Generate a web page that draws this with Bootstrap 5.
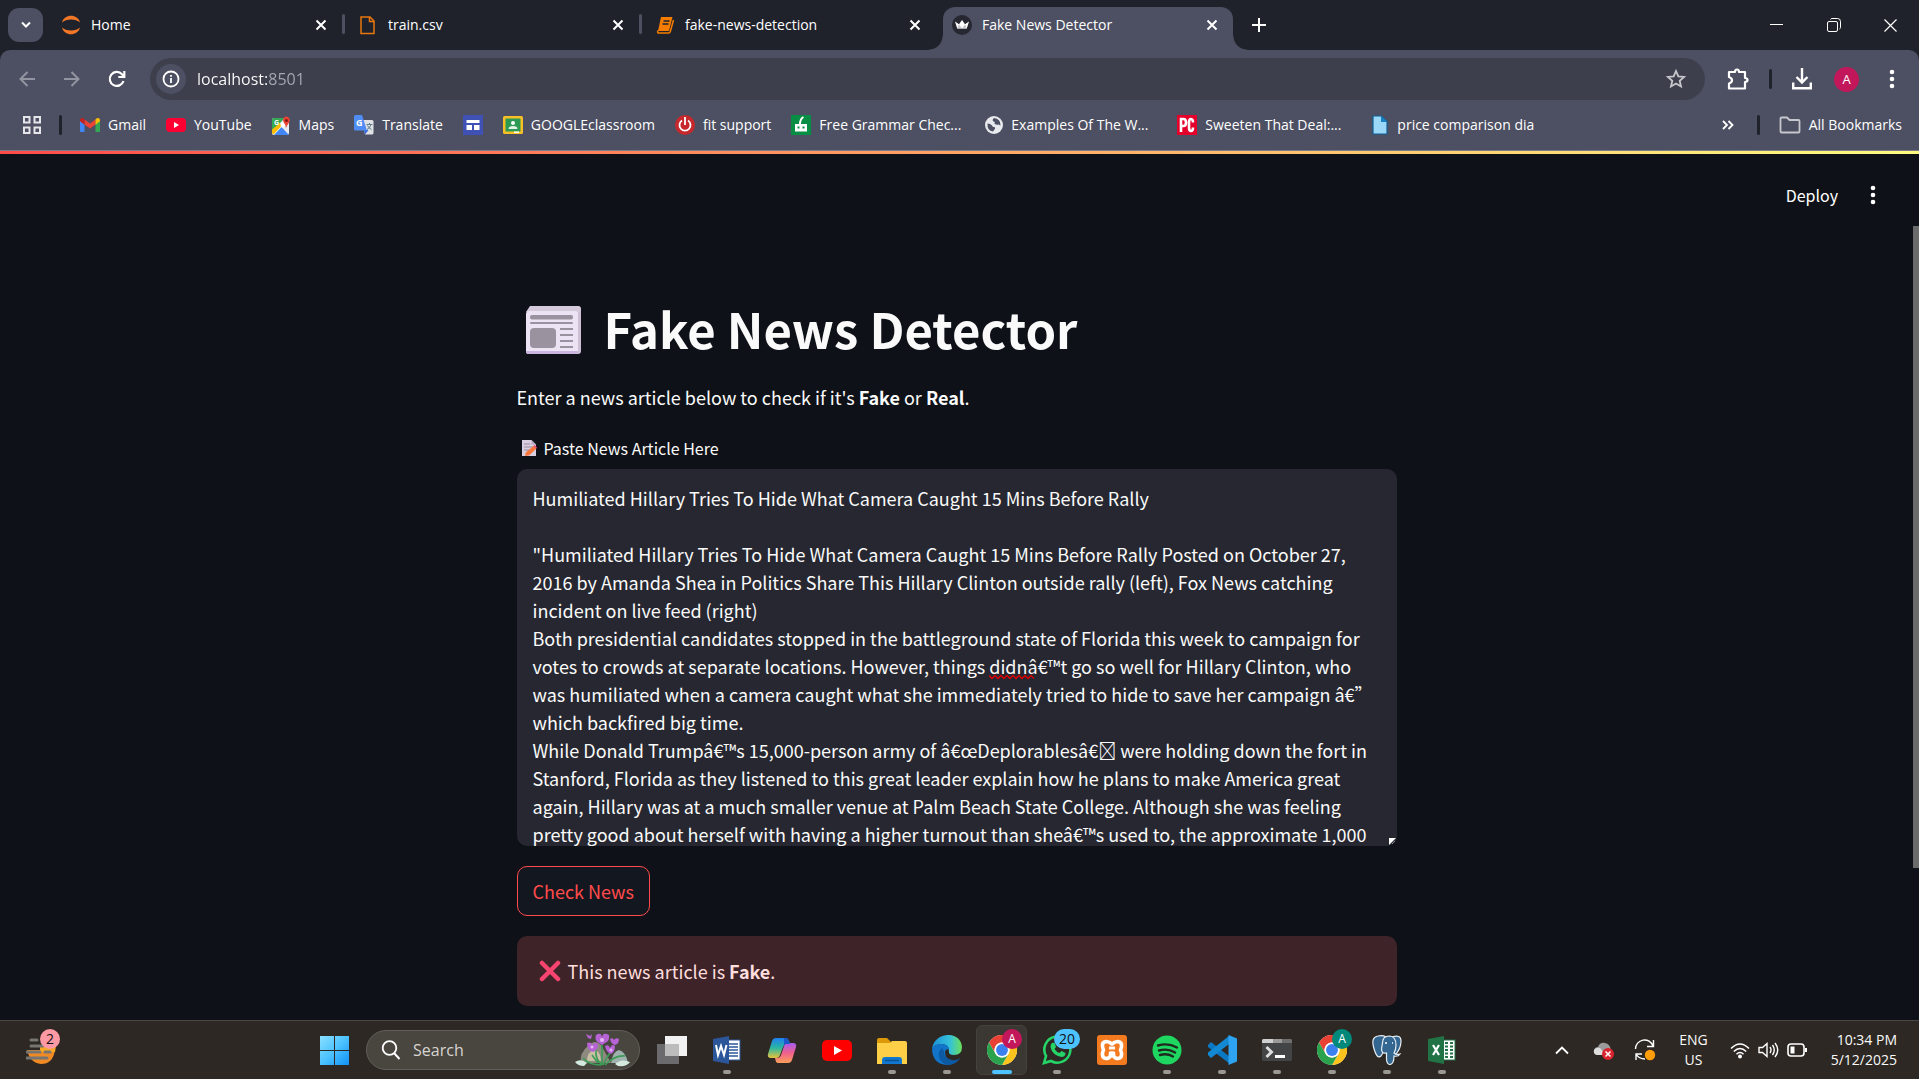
<!DOCTYPE html>
<html lang="en">
<head>
<meta charset="utf-8">
<meta name="viewport" content="width=device-width, initial-scale=1">
<title>Fake News Detector</title>
<link href="https://cdn.jsdelivr.net/npm/bootstrap@5.3.0/dist/css/bootstrap.min.css" rel="stylesheet">
<style>
:root{--strip:#1f222b;--bar:#4d4f62;--field:#3d404c;--page:#0e1117;--ui:"Open Sans","Noto Sans",sans-serif;--app:"Noto Sans CJK SC","Noto Sans",sans-serif}
body{background:var(--page);color:#fafafa;font-family:var(--ui);font-size:14px;line-height:20px}
svg{display:block;flex:none}
button,a{color:inherit}
.plain{background:none;border:0;padding:0}
/* browser tabs */
.tabstrip{background:var(--strip);height:50px}
.tab-search{width:35px;height:34px;margin:0 5px 0 8px;border-radius:11px;background:var(--bar)}
.b-tab{width:297px;height:43px;margin-top:7px;padding:0 18px 7px 13px;position:relative}
.b-tab .ico{width:20px;margin-right:10px}
.b-tab a{color:#fff;text-decoration:none}
.b-tab.sep::after{content:"";position:absolute;right:0;top:7px;width:3px;height:20px;border-radius:2px;background:var(--bar)}
.b-tab.current{z-index:1}
.b-tab.current .back{position:absolute;inset:0 3px 0 4px;background:var(--bar);border-radius:12px 12px 0 0;z-index:-1}
.back::before,.back::after{content:"";position:absolute;bottom:0;width:14px;height:14px}
.back::before{left:-14px;background:radial-gradient(circle at 0 0,transparent 13px,var(--bar) 14px)}
.back::after{right:-14px;background:radial-gradient(circle at 100% 0,transparent 13px,var(--bar) 14px)}
.winbtn{width:57px;height:50px}
/* toolbar */
.toolwrap{background:var(--strip)}
.toolwrap>div{background:var(--bar);border-radius:10px 10px 0 0}
.toolbar{height:50px;padding:8px 24px 0 4px}
.nav-b{width:45px;height:42px}
.omni{background:var(--field);height:42px;border-radius:21px;margin:0 22px 0 11px;padding:0 18px 0 6px}
.omni input{background:linear-gradient(90deg,#fff 70px,#a7a9b2 70px);-webkit-background-clip:text;background-clip:text;-webkit-text-fill-color:transparent;color:#fff;border:0;outline:0;font-size:16px;padding:0}
.info{width:30px;height:30px;border-radius:50%;background:var(--bar);margin-right:11px}
.vrule{width:3px;height:20px;border-radius:2px;background:var(--strip);flex:none;margin:0 20px}
.toolbar .avatar{width:25px;height:25px;border-radius:50%;background:#c2185b;font-size:13px;margin:0 30px 0 22px}
.bookmarks{height:50px;padding:0 17px 0 23px;white-space:nowrap}
.bookmarks a{color:#fff;text-decoration:none;display:flex;align-items:center;gap:8px;margin-right:20px}
.bookmarks .vrule{margin:0 18px}
.bookmarks .cut{width:146px}
.bookmarks .more .vrule{margin:0 19px 0 23px}
.topline{height:4px;border-top:1px solid #7b7d8b;background:linear-gradient(90deg,#ff4b4b,#fffd80)}
/* app */
.app{font-family:var(--app);font-size:18px;line-height:28px;padding:0 6px 0 0}
.app-head{height:84px;padding:0 37px 2px 0;font-size:16px;gap:32px}
.thumb{position:absolute;right:0;top:72px;width:6px;height:642px;background:#6b6b6b}
.col-main{max-width:880px;margin:0 auto;padding-top:52px}
h1{font-family:var(--app);font-size:49px;font-weight:700;line-height:66px;margin:0 0 22px;gap:23px;padding:5px 0 0 9px}
.intro{margin:0 0 25px}
.lab{font-size:16px;line-height:24px;gap:7px;margin:0 0 9px;padding:0 0 0 4px}
.paste{height:377px;border:0;border-radius:10px;background:#262730;color:#fafafa;padding:15px 16px;font-size:18px;line-height:28px;resize:none;overflow:hidden;outline:0}
.squiggle{position:absolute;left:472px;top:205px}
.grip{position:absolute;right:1px;bottom:1px}
.check{height:50px;margin:20px 0;padding:0 15px;border:1px solid #ff4b4b;border-radius:10px;background:#131720;color:#ff4b4b}
.verdict{height:70px;border:0;border-radius:10px;background:#3e2328;color:#ffdede;padding:0 22px;margin:0;gap:7px}
/* taskbar */
.taskbar{background:#2d2823;border-top:1px solid #4b4742;height:59px}
.side{flex:0 0 16%}
.t-ic{width:55px;height:58px;position:relative;display:flex;align-items:center;justify-content:center}
.t-ic.run::after{content:"";position:absolute;bottom:5px;width:8px;height:4px;border-radius:2px;background:#9b9893}
.t-ic.front::before{content:"";position:absolute;inset:4px 2px;background:#3b3732;border:1px solid #45413c;border-radius:6px}
.t-ic.front::after{width:20px;background:#4cc2ff}
.t-ic svg{position:relative}
.dot{position:absolute;border-radius:10px;height:20px;min-width:20px;text-align:center;color:#fff;font-size:12px;top:8px;left:28px}
.dot.pink{background:#c2185b}
.dot.teal{background:#00897b}
.dot.news{left:40px;background:#ff99a4;color:#111;font-size:14px}
.dot.count{left:25px;width:26px;background:#4cc2ff;color:#111;font-size:14px}
.weather{position:relative;padding-left:26px;height:58px}
.searchbox{width:274px;height:40px;border-radius:20px;background:#494640;border:1px solid #625f5a;margin-right:4px;padding:0 8px 0 14px}
.searchbox input{background:none;border:0;outline:0;color:#d6d4d1;font-size:16px;padding:0;min-width:0}
.searchbox input::placeholder{color:#d6d4d1;opacity:1}
.tray{padding-right:22px}
.tray .two{line-height:20px;text-align:center}
.tray .lang{margin:0 22px 0 23px}
.tray .clock{margin-left:23px}
.tray .cloud{margin:0 19px 0 24px}
</style>
</head>
<body class="d-flex flex-column vh-100 overflow-hidden">
<svg width="0" height="0" class="position-absolute" aria-hidden="true">
<defs>
<symbol id="x" viewBox="0 0 12 12"><path d="M1.500 1.500l9 9m0-9l-9 9" stroke="#fff" stroke-width="2" fill="none"/></symbol>
<symbol id="dots" viewBox="0 0 6 20"><g fill="#fff"><circle cx="3" cy="3" r="2.300"/><circle cx="3" cy="10" r="2.300"/><circle cx="3" cy="17" r="2.300"/></g></symbol>
<symbol id="chrome" viewBox="0 0 48 48"><circle cx="24" cy="24" r="24" fill="#fff"/><path d="M3.200 12A24 24 0 0 1 44.800 12H24a12 12 0 0 0-10.400 18z" fill="#e94235"/><path d="M44.800 12A24 24 0 0 1 24 48l10.400-18A12 12 0 0 0 24 12z" fill="#fcc31e"/><path d="M24 48A24 24 0 0 1 3.200 12l10.400 18A12 12 0 0 0 34.400 30z" fill="#2ba24c"/><circle cx="24" cy="24" r="12" fill="#fff"/><circle cx="24" cy="24" r="9.500" fill="#3b80ee"/></symbol>
</defs>
</svg>
<header>
<nav class="tabstrip d-flex align-items-center" aria-label="Tabs">
<button class="tab-search plain d-flex align-items-center justify-content-center" aria-label="Search tabs"><svg width="12" height="8"><path d="M2 1.500l4 4 4-4" stroke="#fff" stroke-width="2" fill="none"/></svg></button>
<div class="b-tab sep d-flex align-items-center align-self-start"><span class="ico"><svg width="20" height="20" viewBox="0 0 20 20"><path d="M1 7.500C3-1.500 17-1.500 19 7.500 15 3.500 5 3.500 1 7.500zM1 12.500c2 9 16 9 18 0-4 4-14 4-18 0z" fill="#f37726"/></svg></span><a href="#">Home</a><button class="plain ms-auto" aria-label="Close"><svg width="12" height="12"><use href="#x"/></svg></button></div>
<div class="b-tab sep d-flex align-items-center align-self-start"><span class="ico"><svg width="20" height="20" viewBox="0 0 20 20"><path d="M3 2h9l4 4v12.500H3zM11.500 2v4.500H16" stroke="#e8770e" stroke-width="1.500" fill="none"/></svg></span><a href="#">train.csv</a><button class="plain ms-auto" aria-label="Close"><svg width="12" height="12"><use href="#x"/></svg></button></div>
<div class="b-tab d-flex align-items-center align-self-start"><span class="ico"><svg width="20" height="20" viewBox="0 0 20 20"><path d="M6 2h11.500L14 16H3z" fill="#f57c00"/><path d="M3 15.500c-1 2 0 2.500 1 2.500h9.500c1 0 1.500-.5 1.800-1.500L18.500 5" stroke="#f57c00" stroke-width="1.500" fill="none"/><path d="M8.500 6h6M7.500 9h6" stroke="#1f222b" stroke-width="1.500"/></svg></span><a href="#">fake-news-detection</a><button class="plain ms-auto" aria-label="Close"><svg width="12" height="12"><use href="#x"/></svg></button></div>
<div class="b-tab current d-flex align-items-center align-self-start"><span class="back"></span><span class="ico"><svg width="20" height="20" viewBox="0 0 20 20"><circle cx="10" cy="10" r="10" fill="#262730"/><path d="M3 6.500l4 2.700L10 5l3 4.200 4-2.700L14.800 13.500H5.200z" fill="#fff"/><path d="M5.200 13.500L7 9.200l3 4.300 3-4.300 1.800 4.300z" fill="#c8c8cc"/></svg></span><a href="#">Fake News Detector</a><button class="plain ms-auto" aria-label="Close"><svg width="12" height="12"><use href="#x"/></svg></button></div>
<button class="plain ms-3" aria-label="New tab"><svg width="14" height="14"><path d="M7 0v14M0 7h14" stroke="#fff" stroke-width="2"/></svg></button>
<div class="ms-auto d-flex">
<button class="winbtn plain d-flex align-items-center justify-content-center" aria-label="Minimize"><svg width="13" height="13"><path d="M0 5.500h13" stroke="#fff"/></svg></button>
<button class="winbtn plain d-flex align-items-center justify-content-center" aria-label="Restore"><svg width="14" height="14" fill="none" stroke="#fff"><rect x=".5" y="3.500" width="10" height="10" rx="1.500"/><path d="M3.500 1.500q.5-1 1.500-1h5.500q3 0 3 3v6q0 1-1 1.500"/></svg></button>
<button class="winbtn plain d-flex align-items-center justify-content-center" aria-label="Close window"><svg width="13" height="13"><path d="M.5 .5l12 12m0-12l-12 12" stroke="#fff" stroke-width="1.200"/></svg></button>
</div>
</nav>
<div class="toolwrap"><div>
<div class="toolbar d-flex align-items-center">
<button class="nav-b plain d-flex align-items-center justify-content-center" aria-label="Back"><svg width="16" height="16" fill="none" stroke="#9294a1" stroke-width="2"><path d="M16 8H2M8.500 1L1.500 8l7 7"/></svg></button>
<button class="nav-b plain d-flex align-items-center justify-content-center" aria-label="Forward"><svg width="16" height="16" fill="none" stroke="#9294a1" stroke-width="2"><path d="M0 8h14M7.500 1l7 7-7 7"/></svg></button>
<button class="nav-b plain d-flex align-items-center justify-content-center" aria-label="Reload"><svg width="18" height="18" fill="none" stroke="#fff" stroke-width="2.200"><path d="M15.500 11A7 7 0 1 1 14 4.200L16 6.500M16.300 1v6h-6"/></svg></button>
<div class="omni d-flex align-items-center flex-grow-1">
<span class="info d-flex align-items-center justify-content-center"><svg width="18" height="18"><circle cx="9" cy="9" r="7.500" stroke="#fff" stroke-width="1.800" fill="none"/><path d="M9 8v5M9 5v1.800" stroke="#fff" stroke-width="1.800"/></svg></span>
<input class="flex-grow-1" type="text" value="localhost:8501" aria-label="Address">
<button class="plain" aria-label="Bookmark this page"><svg width="22" height="22" viewBox="0 0 22 22"><path d="M11 3l2.300 5.400 5.800.5-4.400 3.900 1.300 5.700-5-3-5 3 1.300-5.700L2.900 8.900l5.800-.5z" stroke="#c6c7cc" stroke-width="1.800" fill="none"/></svg></button>
</div>
<button class="plain" aria-label="Extensions"><svg width="22" height="24" viewBox="0 0 22 24"><path d="M2 5h6q0-2.500 2-2.500T12 5h6v6q2.500.2 2.500 2T18 15v6.500H2v-5q3-.8 3-3.200T2 10z" stroke="#fff" stroke-width="2.200" fill="none" stroke-linejoin="round"/></svg></button>
<span class="vrule"></span>
<button class="plain" aria-label="Downloads"><svg width="20" height="22" viewBox="0 0 20 22"><path d="M10 0v14M4.500 9l5.500 5.500L15.500 9M1.200 14.500v5.800h17.600v-5.800" stroke="#fff" stroke-width="2.400" fill="none"/></svg></button>
<button class="plain avatar text-white" aria-label="Profile">A</button>
<button class="plain" aria-label="Menu"><svg width="6" height="20"><use href="#dots"/></svg></button>
</div>
<div class="bookmarks d-flex align-items-center">
<button class="plain" aria-label="Apps"><svg width="18" height="18" fill="none" stroke="#e6e6ea" stroke-width="2"><path d="M1 1h5.500v5.500H1zM11.500 1H17v5.500h-5.500zM1 11.500h5.500V17H1zM11.500 11.500H17V17h-5.500z"/></svg></button>
<span class="vrule"></span>
<a href="#"><svg width="20" height="16" viewBox="0 0 20 16"><path d="M0 3v11q0 1 1 1h3.500V7z" fill="#4285f4"/><path d="M20 3v11q0 1-1 1h-3.500V7z" fill="#34a853"/><path d="M4.500 2.500L10 6.600l5.500-4.100v5L10 11.600 4.500 7.500z" fill="#ea4335"/><path d="M15.500 2.200C18 0 20 1 20 3.500v.8l-4.500 3.400z" fill="#fbbc04"/><path d="M4.500 2.200C2 0 0 1 0 3.500v.8l4.500 3.400z" fill="#c5221f"/></svg>Gmail</a>
<a href="#"><svg width="20" height="14" viewBox="0 0 20 14"><rect width="20" height="14" rx="4" fill="#f03"/><path d="M8 4l5 3-5 3z" fill="#fff"/></svg>YouTube</a>
<a href="#"><svg width="19" height="19" viewBox="0 0 19 19"><rect y="2" width="17" height="17" rx="2" fill="#e8eaed"/><path d="M0 4q0-2 2-2h11L0 15z" fill="#34a853"/><path d="M0 17L13 4l4 0v2L4 19H2z" fill="#fff"/><path d="M2 19l7.500-8 7.500 8z" fill="#4285f4"/><path d="M0 13.500V17l1.500 1.500L9 10.500 8 7z" fill="#fbbc04"/><path d="M14 12q0-3-2-5-2-3 .2-5.500 2-2 4.400 0Q19 4 16.800 7 15 9 14 12z" fill="#ea4335"/><circle cx="14.400" cy="4.500" r="1.500" fill="#811411"/><text x="2" y="9" font-size="7" font-weight="700" fill="#fff">G</text></svg>Maps</a>
<a href="#"><svg width="20" height="20" viewBox="0 0 20 20"><path d="M8 5h10q1.500 0 1.500 1.500V18q0 1.500-1.500 1.500h-7z" fill="#dfe1e5"/><path d="M10 15l1 4.500 3.500-4.500z" fill="#3367d6"/><path d="M1.500 0H8l5 15.500H1.500Q0 15.500 0 14V1.500Q0 0 1.500 0z" fill="#4f8df5"/><path d="M12.500 9.500h6M15.500 8v1.500M17 9.500q-.5 3-4 5M13.500 10.500q1 2.500 4 4" stroke="#607d8b" fill="none"/><text x="2" y="11" font-size="9" font-weight="700" fill="#fff">G</text></svg>Translate</a>
<a href="#" aria-label="Sites"><svg width="20" height="20"><rect width="20" height="20" fill="#3f51b5"/><path d="M3.500 5h13v3h-13zM3.500 10h5.500v5H3.500zM11 10h5.500v5H11z" fill="#fff"/></svg></a>
<a href="#"><svg width="20" height="18" viewBox="0 0 20 18"><rect width="20" height="18" rx="1.500" fill="#f6bf26"/><rect x="2.500" y="2.500" width="15" height="13" fill="#2c9a53"/><circle cx="10" cy="7" r="2" fill="#fff"/><path d="M5.500 13q0-3 4.500-3t4.500 3z" fill="#e3f3e7"/><path d="M11 15.500h5v1.500h-5z" fill="#fff"/></svg>GOOGLEclassroom</a>
<a href="#"><svg width="20" height="20"><circle cx="10" cy="10" r="10" fill="#c6282c"/><path d="M7 5.500a5.500 5.500 0 1 0 6 0M10 2v8" stroke="#fff" stroke-width="1.800" fill="none"/></svg>fit support</a>
<a href="#"><svg width="20" height="20"><rect width="20" height="20" fill="#088d45"/><path d="M4 9h12v7.500H4z" fill="#fff"/><path d="M9 9q0-5 3.500-7" stroke="#fff" stroke-width="2" fill="none"/><path d="M6.500 11.500h2v2h-2zM11.500 11.500h2v2h-2z" fill="#088d45"/></svg><span class="cut">Free Grammar Chec...</span></a>
<a href="#"><svg width="18" height="18" viewBox="0 0 18 18"><circle cx="9" cy="9" r="9" fill="#e8eaed"/><path d="M2.500 7.500q3 .2 4.500 2 .5 1.500 2 1.500 2 .5.500 2.500l-1.500 2Q2 15 2.500 7.500zM9 2q-2.500 2-.5 3.500 2 .5 1 2.500 2.500 1 4.500.5 1.500 1.500 1.500.5Q15.500 3 9 2z" fill="#4d4f62"/></svg><span class="cut">Examples Of The W...</span></a>
<a href="#"><svg width="20" height="20"><rect width="20" height="20" fill="#e4002b"/><path d="M4 17V4h2.500q2.500 0 2.500 3.500T6.500 11H5M16 7.500Q16 4 14 4t-2 3.500v5Q12 16 14 16t2-3.500" stroke="#fff" stroke-width="2.600" fill="none"/></svg><span class="cut">Sweeten That Deal:...</span></a>
<a href="#"><svg width="18" height="20" viewBox="0 0 18 20"><path d="M2 1h8.500L16 6.500V19H2z" fill="#9bd7f7" stroke="#0f5f94" stroke-width="1.200"/><path d="M10 1v6h6z" fill="#1681c4"/></svg>price comparison dia</a>
<div class="more ms-auto d-flex align-items-center">
<button class="plain" aria-label="More bookmarks"><svg width="12" height="10"><path d="M1 1l4 4-4 4M6.500 1l4 4-4 4" stroke="#fff" stroke-width="1.800" fill="none"/></svg></button>
<span class="vrule"></span>
<a class="me-0" href="#"><svg width="22" height="18"><path d="M1.500 2.500q0-1 1-1H8L10.500 4h9q1 0 1 1v10.500q0 1-1 1h-17q-1 0-1-1z" fill="none" stroke="#c6c7cc" stroke-width="1.800"/></svg>All Bookmarks</a>
</div>
</div>
</div></div>
</header>
<div class="topline"></div>
<main class="app flex-grow-1 position-relative overflow-hidden">
<div class="app-head d-flex align-items-center justify-content-end">
<a href="#" class="text-decoration-none text-white">Deploy</a>
<button class="plain" aria-label="Main menu"><svg width="6" height="20" viewBox="0 0 6 20"><use href="#dots"/></svg></button>
</div>
<span class="thumb"></span>
<div class="col-main">
<h1 class="d-flex align-items-center"><svg class="mt-1" width="55" height="48" viewBox="0 0 55 48"><rect x="4" width="51" height="48" rx="3" fill="#cdbfd4"/><path d="M4 0h47q4 0 4 4L51 8 0 6z" fill="#d5c9dc"/><rect y="5" width="52" height="43" rx="3" fill="#ece4f4"/><path d="M0 45h52v1q0 2-3 2H3q-3 0-3-2z" fill="#cbb4de"/><g fill="#9b929f"><rect x="4" y="9" width="43" height="4.500" rx="2"/><rect x="4" y="16" width="43" height="2" rx="1"/><rect x="4" y="22" width="26" height="20" rx="4"/><path d="M34 22h13v2H34zM34 28h13v2H34zM34 34h13v2H34zM34 40h13v2H34z"/></g></svg><span>Fake News Detector</span></h1>
<p class="intro">Enter a news article below to check if it's <strong>Fake</strong> or <strong>Real</strong>.</p>
<label for="article" class="lab d-flex align-items-center"><svg width="16" height="18" viewBox="0 0 16 18"><path d="M1 1h9.500L15 5.500V17H1z" fill="#d9cfe0"/><path d="M10.500 1v4.500H15z" fill="#b3a5bd"/><path d="M3 5h6M3 8h9M3 11h6" stroke="#958b9c"/><path d="M4 17l.8-3.500L12.500 7l3 2.500-7.500 7z" fill="#f9773c"/><path d="M12.500 7l1.300-1 2.200 2.500-.8 1z" fill="#e8456b"/></svg>Paste News Article Here</label>
<div class="position-relative">
<textarea id="article" class="paste d-block w-100" spellcheck="false">
Humiliated Hillary Tries To Hide What Camera Caught 15 Mins Before Rally

"Humiliated Hillary Tries To Hide What Camera Caught 15 Mins Before Rally Posted on October 27, 2016 by Amanda Shea in Politics Share This Hillary Clinton outside rally (left), Fox News catching incident on live feed (right)
Both presidential candidates stopped in the battleground state of Florida this week to campaign for votes to crowds at separate locations. However, things didnâ€™t go so well for Hillary Clinton, who was humiliated when a camera caught what she immediately tried to hide to save her campaign â€” which backfired big time.
While Donald Trumpâ€™s 15,000-person army of â€œDeplorablesâ€&#xE123; were holding down the fort in Stanford, Florida as they listened to this great leader explain how he plans to make America great again, Hillary was at a much smaller venue at Palm Beach State College. Although she was feeling pretty good about herself with having a higher turnout than sheâ€™s used to, the approximate 1,000</textarea>
<svg class="squiggle" width="48" height="6"><path d="M0 1.500l3 3 3-3 3 3 3-3 3 3 3-3 3 3 3-3 3 3 3-3 3 3 3-3 3 3 3-3 3 3" stroke="#e00000" stroke-width="1.300" fill="none"/></svg>
<svg class="grip" width="7" height="7"><path d="M0 0h7L0 7z" fill="#fff"/><path d="M3 6l3-3" stroke="#888"/></svg>
</div>
<button class="check d-block">Check News</button>
<div class="verdict alert d-flex align-items-center" role="alert"><svg width="22" height="22"><path d="M3 3l16 16M19 3L3 19" stroke="#f8456f" stroke-width="4.500" stroke-linecap="round"/></svg><span>This news article is <strong>Fake</strong>.</span></div>
</div>
</main>
<footer class="taskbar d-flex">
<div class="side"><div class="weather d-flex align-items-center"><svg width="30" height="30" viewBox="0 0 30 30"><path d="M1 15h28q-2 14-14 14Q4 28 1 15z" fill="#f08a24"/><path d="M14 11h16l-1 6H14z" fill="#f9a825"/><path d="M5 5h6M5 11h12M1 17h13M1 23h20M19 17h5" stroke="#777572" stroke-width="3" stroke-linecap="round"/></svg><span class="dot news">2</span></div></div>
<nav class="d-flex align-items-center" aria-label="Taskbar">
<a class="t-ic" href="#" aria-label="Start"><svg width="29" height="29"><defs><linearGradient id="w" x2="1" y2="1" gradientUnits="userSpaceOnUse" gradientTransform="scale(29)"><stop stop-color="#8adfff"/><stop offset=".5" stop-color="#4cc2ff"/><stop offset="1" stop-color="#1090f5"/></linearGradient></defs><path d="M0 0h14v14H0zM15 0h14v14H15zM0 15h14v14H0zM15 15h14v14H15z" fill="url(#w)"/></svg></a>
<div class="searchbox d-flex align-items-center ms-1"><svg width="20" height="20"><circle cx="8.500" cy="8" r="6.800" fill="none" stroke="#fff" stroke-width="1.800"/><path d="M13 13l5.500 6" stroke="#fff" stroke-width="2"/></svg><input class="flex-grow-1 ms-2 ps-1" type="text" placeholder="Search" aria-label="Search">
<svg width="56" height="34" viewBox="0 0 56 34"><path d="M6 30Q4 20 14 12q6-6 12 0l10 18z" fill="#8f8a80"/><path d="M12 28q0-9 8-12 6 4 6 12z" fill="#c9bfa4"/><path d="M36 30q2-12 8-13 7 2 9 13z" fill="#9fb2ae"/><path d="M0 29q6-4 12 1l-3 3q-6 0-9-4zM40 31q6-6 15-2-3 5-12 4z" fill="#d5eadf"/><g stroke="#3a9c55" stroke-width="1.600" fill="none"><path d="M27 32V12M27 32Q20 26 21 17M28 32q4-8 8-14M26 32Q14 32 8 25M30 32q10-10 20-9M23 30l-6-8"/></g><g fill="#b763d6"><path d="M21 2q6-4 6 4 0-8 7-4 1 6-4 8l-3 2-3-2q-5-3-3-8z"/><path d="M12 10q5-2 5 3 2-5 6-2 0 6-5 8-6-2-6-9zM30 13q4-2 5 2 2-5 5-2 0 6-4 8-5-2-6-8zM35 6q3-2 4 1 2-3 5-1 0 5-4 6-4-1-5-6zM11 1l4 2 2-2-1 5-3-1z"/></g><g fill="#e7b8f5"><circle cx="27" cy="7" r="2"/><circle cx="17" cy="14" r="1.500"/><circle cx="36" cy="17" r="1.500"/></g></svg></div>
<a class="t-ic" href="#" aria-label="Task view"><svg width="30" height="28"><rect x="8" y="0" width="22" height="20" fill="#f1f1f1"/><rect y="8" width="22" height="20" fill="#77777a" opacity=".85"/><rect x="8" y="8" width="14" height="12" fill="#bcbcbc"/></svg></a>
<a class="t-ic run" href="#" aria-label="Word"><svg width="28" height="28"><rect x="12" y="4" width="15" height="20" fill="#fff" stroke="#2b579a"/><path d="M16 8h9M16 11h9M16 14h9M16 17h9M16 20h9" stroke="#2b579a" stroke-width="1.500"/><path d="M0 3l16-3v28L0 25z" fill="#2b579a"/><path d="M3 9l2 10 3-9 3 9 2.500-10" fill="none" stroke="#fff" stroke-width="2"/></svg></a>
<a class="t-ic" href="#" aria-label="Copilot"><svg width="30" height="27" viewBox="0 0 30 27"><defs><linearGradient id="c1" x2="0" y2="1"><stop stop-color="#1f7ff0"/><stop offset=".5" stop-color="#2bb8a0"/><stop offset="1" stop-color="#e8c43c"/></linearGradient><linearGradient id="c2" x2="0" y2="1"><stop stop-color="#a45cf0"/><stop offset=".5" stop-color="#f0618c"/><stop offset="1" stop-color="#fca05a"/></linearGradient></defs><path d="M9 1h10q2 0 3 3l1 3h-4q-2 0-3 3l-3 8q-1 3-4 3H4q-4 0-3-4L5 4q1-3 4-3z" fill="url(#c1)"/><path d="M21 26H11q-2 0-2.500-3L8 21h2q3 0 4-3l3-9q1-3 4-3h5q4 0 3 4l-4 13q-1 3-4 3z" fill="url(#c2)"/><path d="M17 1h2q2 0 3 3l1 3h-4q-1 0-2 1z" fill="#1c58c9"/></svg></a>
<a class="t-ic" href="#" aria-label="YouTube"><svg width="30" height="21"><rect width="30" height="21" rx="5" fill="#fe0000"/><path d="M12 6l8 4.500-8 4.500z" fill="#fff"/></svg></a>
<a class="t-ic run" href="#" aria-label="Files"><svg width="30" height="27"><path d="M0 3q0-2 2-2h8l4 4v6H0z" fill="#dc9a08"/><path d="M0 6h13l2-2h13q2 0 2 2v21H0z" fill="#ffcf48"/><path d="M5 27v-4q0-3 3-3h14q3 0 3 3v4z" fill="#1278cf"/><path d="M8 23.500h14" stroke="#0b5192" stroke-width="1.500"/></svg></a>
<a class="t-ic run" href="#" aria-label="Edge"><svg width="30" height="30"><defs><linearGradient id="e1"><stop stop-color="#1b8fd8"/><stop offset=".6" stop-color="#35c1d8"/><stop offset="1" stop-color="#6be05a"/></linearGradient></defs><path d="M0 15C1-4 29-5 30 12q0 8-8 8-6 0-5-4Q17 9 9 9 2 9 0 15z" fill="url(#e1)"/><path d="M0 15Q2 8 10 9q7 0 7 6-3-2-4 2 0 8 8 9 4 0 7-3-5 7-13 7Q1 29 0 15z" fill="#1274c9"/><path d="M10 13q-4 3-3 9 2 6 8 8 9 0 13-7-3 3-8 2-9-2-8-9z" fill="#0c59a4"/></svg></a>
<a class="t-ic run front" href="#" aria-label="Chrome"><svg width="30" height="30"><use href="#chrome"/></svg><span class="dot pink">A</span></a>
<a class="t-ic run" href="#" aria-label="WhatsApp"><svg width="30" height="30" viewBox="0 0 30 30"><path d="M2 28l2-7A13 13 0 1 1 9 26z" fill="none" stroke="#25d366" stroke-width="2.600"/><path d="M10 8q2-1 3 1l1 3-1.500 2q2 3 5 4l2-2 4 2q0 4-4 4Q10 20 8.500 12q0-3 1.500-4z" fill="#25d366"/></svg><span class="dot count">20</span></a>
<a class="t-ic" href="#" aria-label="XAMPP"><svg width="30" height="30"><rect width="30" height="30" rx="3" fill="#f47a20"/><path d="M9 6.500q3 0 6 2.500 3-2.500 6-2.500 4 .5 3.500 4.500 0 2-1 4 1 2 1 4 .5 4-3.500 4.500-3 0-4.500-2.500v-3h-3v3q-1.500 2.500-4.500 2.500-4-.5-3.500-4.500 0-2 1-4-1-2-1-4Q5 7 9 6.500z" fill="none" stroke="#fff" stroke-width="3.600" stroke-linejoin="round"/><path d="M12 13h6" stroke="#fff" stroke-width="3"/></svg></a>
<a class="t-ic run" href="#" aria-label="Spotify"><svg width="30" height="30"><circle cx="15" cy="15" r="14.500" fill="#1ed760"/><path d="M6 10.500q10-3 19 2M7 15.500q9-2.500 16 2M8 20q7-2 13 1.500" fill="none" stroke="#1f2a1f" stroke-width="2.400" stroke-linecap="round"/></svg></a>
<a class="t-ic run" href="#" aria-label="Code"><svg width="30" height="30"><path d="M1 10l3-3 19 15v7L1 12z" fill="#0a78c2"/><path d="M1 20l3 3L22 9V1L1 17.500z" fill="#1389d4"/><path d="M21.500 0L30 3.500v23L21.500 30z" fill="#2ea3f2"/></svg></a>
<a class="t-ic run" href="#" aria-label="Terminal"><svg width="30" height="22"><rect width="30" height="22" rx="1.500" fill="#434446"/><path d="M0 4V1.500Q0 0 1.500 0H11v4z" fill="#d0d0d0"/><path d="M11 0h9v4h-9z" fill="#9a9a9a"/><path d="M20 0h8.500q1.500 0 1.500 1.500V4H20z" fill="#6f6f6f"/><path d="M4.500 8l5 5-5 5" stroke="#ddd" stroke-width="3" fill="none"/><path d="M13 17.500h10" stroke="#fff" stroke-width="3"/></svg></a>
<a class="t-ic run" href="#" aria-label="Chrome, second profile"><svg width="30" height="30"><use href="#chrome"/></svg><span class="dot teal">A</span></a>
<a class="t-ic run" href="#" aria-label="PostgreSQL"><svg width="30" height="30"><g fill="#336791" stroke="#e8edf2" stroke-width="1.200"><path d="M9 21Q5 25 1.500 12-1 2 6 1q5-1 8 1l-2 14z"/><path d="M20 2q9-3 9 4 0 8-6 14l-4-2z"/><path d="M11 5q1-4 7-4 6 1 6 9 0 5-2 8 2 2 6 1-2 3-6 2 0 8-4 8.500-3 0-3.500-5V18q-5 1-5-4z"/></g><path d="M13 8h2M20 8h1" stroke="#fff" stroke-width="1.500"/></svg></a>
<a class="t-ic run" href="#" aria-label="Excel"><svg width="28" height="28"><rect x="13" y="4" width="14" height="20" fill="#fff" stroke="#217346"/><path d="M17 7h3M22 7h3M17 10.500h3M22 10.500h3M17 14h3M22 14h3M17 17.500h3M22 17.500h3M17 21h3M22 21h3" stroke="#217346" stroke-width="2"/><path d="M0 3l16-3v28L0 25z" fill="#217346"/><path d="M5 9l6 10M11 9L5 19" stroke="#fff" stroke-width="2.200"/></svg></a>
</nav>
<div class="tray flex-grow-1 d-flex align-items-center justify-content-end">
<button class="plain" aria-label="Hidden icons"><svg width="14" height="10"><path d="M1 8.500l6-6 6 6" stroke="#fff" stroke-width="1.800" fill="none"/></svg></button>
<svg width="22" height="20" class="cloud" viewBox="0 0 22 20"><path d="M5 15Q0 15 1 10q1-3 4-3 2-5 7-4 5 1 6 7v5z" fill="#9b9b9b"/><path d="M4 15q-4-1-3-5 2-3 6-2l6 7z" fill="#ddd"/><circle cx="15" cy="14" r="6" fill="#d9232e"/><path d="M12.500 11.500l5 5m0-5l-5 5" stroke="#fff" stroke-width="1.500"/></svg>
<svg width="22" height="22"><path d="M1.500 10A9 9 0 0 1 19 7M19.500 1v6.500H13M2 21v-6h6M2 15q3 5 9 5" stroke="#fff" stroke-width="1.400" fill="none"/><circle cx="16" cy="16" r="5.200" fill="#ff9d0a"/></svg>
<div class="two lang">ENG<br>US</div>
<svg width="20" height="17" viewBox="0 0 20 17"><g fill="none" stroke="#fff" stroke-width="1.500"><path d="M1 6.500q9-9 18 0M3.800 9.500q6.200-6 12.400 0M6.500 12.200q3.500-3.400 7 0"/></g><circle cx="10" cy="14.500" r="2" fill="#fff"/></svg>
<svg width="21" height="18" class="mx-2" viewBox="0 0 21 18"><g fill="none" stroke="#fff" stroke-width="1.400"><path d="M1 6.500h3.500L9 2.500v13l-4.500-4H1zM12 6q2 3 0 6M14.500 4q3.500 5 0 10M17 2q5.500 7 0 14"/></g></svg>
<svg width="21" height="14"><rect x="1" y="1" width="16" height="12" rx="3" fill="none" stroke="#fff" stroke-width="1.600"/><rect x="3.500" y="3.500" width="4" height="7" fill="#fff"/><path d="M18 5h2v4h-2z" fill="#fff"/></svg>
<div class="two clock text-end">10:34 PM<br>5/12/2025</div>
</div>
</footer>
<script src="https://cdn.jsdelivr.net/npm/bootstrap@5.3.0/dist/js/bootstrap.bundle.min.js"></script>
</body>
</html>
